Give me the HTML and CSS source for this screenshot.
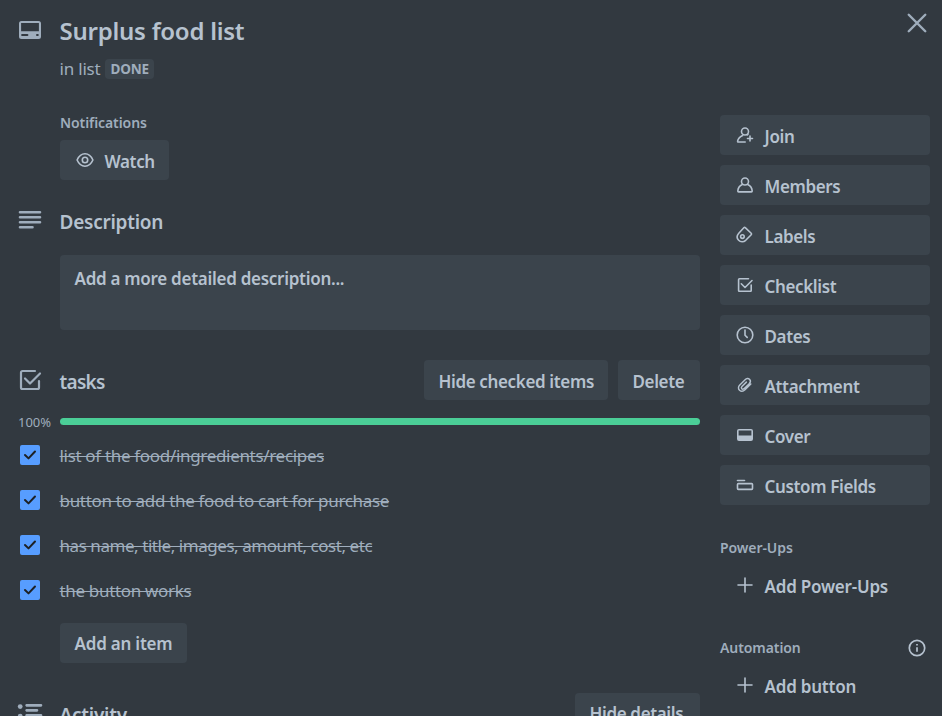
FILE: index.html
```html
<!DOCTYPE html>
<html lang="en">
<head>
<meta charset="utf-8">
<title>Surplus food list</title>
<link rel="stylesheet" href="styles.css">
</head>
<body>
<div class="card">
  <header class="card-header">
    <svg class="icon" viewBox="0 0 24 24"><path fill-rule="evenodd" d="M3.500 3h17a2.500 2.500 0 0 1 2.500 2.500v13a2.500 2.500 0 0 1-2.500 2.500h-17A2.500 2.500 0 0 1 1 18.500v-13A2.500 2.500 0 0 1 3.500 3Zm-.4 2.100v8.200h17.800V5.100H3.100Zm1 10.900a1 1 0 0 0 0 2h5.300a1 1 0 0 0 0-2H4.100Zm14.900 0a1 1 0 0 0 0 2h.8a1 1 0 0 0 0-2H19Z"/></svg>
    <div class="heading">
      <h1>Surplus food list</h1>
      <p class="in-list"><span>in list</span><span class="list-name">DONE</span></p>
    </div>
    <button class="close" aria-label="Close"><svg viewBox="0 0 20 20"><path d="M2.500 2.500l15 15M17.500 2.500l-15 15"/></svg></button>
  </header>
  <div class="columns">
    <main>
      <section class="notifications">
        <h3>Notifications</h3>
        <button class="btn watch"><svg class="small stroke" viewBox="0 0 20 20"><path d="M2.100 10C4 5.700 6.800 3.800 10 3.800s6 1.900 7.900 6.200c-1.900 4.300-4.700 6.200-7.900 6.200S4 14.300 2.100 10Z"/><circle cx="10" cy="10" r="2.700"/></svg><span>Watch</span></button>
      </section>
      <section class="description">
        <div class="section-head">
          <svg class="icon" viewBox="0 0 24 24"><path d="M2 3h20a1.300 1.300 0 0 1 0 2.600H2A1.300 1.300 0 0 1 2 3Zm0 5h20a1.300 1.300 0 0 1 0 2.600H2A1.300 1.300 0 0 1 2 8Zm0 5h20a1.300 1.300 0 0 1 0 2.600H2A1.300 1.300 0 0 1 2 13Zm0 5h12.500a1.300 1.300 0 0 1 0 2.600H2A1.300 1.300 0 0 1 2 18Z"/></svg>
          <h2>Description</h2>
        </div>
        <div class="description-box">Add a more detailed description...</div>
      </section>
      <section class="checklist">
        <div class="section-head">
          <svg class="icon big-stroke" viewBox="0 0 24 24"><path d="M17 3H4.500A1.500 1.500 0 0 0 3 4.500v15A1.500 1.500 0 0 0 4.500 21h15a1.500 1.500 0 0 0 1.500-1.500V13M7 10.500l5 5L22 5.500"/></svg>
          <h2>tasks</h2>
          <div class="actions"><button class="btn hide-checked">Hide checked items</button><button class="btn delete">Delete</button></div>
        </div>
        <div class="progress"><span>100%</span><div class="bar"></div></div>
        <ul>
          <li><svg class="check" viewBox="0 0 20 20"><path d="M5 10l3.500 3.400L15 6.500"/></svg><s>list of the food/ingredients/recipes</s></li>
          <li><svg class="check" viewBox="0 0 20 20"><path d="M5 10l3.500 3.400L15 6.500"/></svg><s>button to add the food to cart for purchase</s></li>
          <li><svg class="check" viewBox="0 0 20 20"><path d="M5 10l3.500 3.400L15 6.500"/></svg><s class="tight">has name, title, images, amount, cost, etc</s></li>
          <li><svg class="check" viewBox="0 0 20 20"><path d="M5 10l3.500 3.400L15 6.500"/></svg><s>the button works</s></li>
        </ul>
        <button class="btn add-item">Add an item</button>
      </section>
      <section class="activity">
        <div class="section-head">
          <svg class="icon" viewBox="0 0 24 24"><circle cx="2.200" cy="5.600" r="2.400"/><circle cx="2.200" cy="15.100" r="2.400"/><path d="M8.300 3h15a1.400 1.400 0 0 1 0 2.700h-15a1.400 1.400 0 0 1 0-2.700Zm0 5h11a1.400 1.400 0 0 1 0 2.700h-11a1.400 1.400 0 0 1 0-2.700Zm0 5h15a1.400 1.400 0 0 1 0 2.700h-15a1.400 1.400 0 0 1 0-2.700Z"/></svg>
          <h2>Activity</h2>
          <div class="actions"><button class="btn details">Hide details</button></div>
        </div>
      </section>
    </main>
    <aside>
      <nav>
        <button class="btn side"><svg class="small stroke" viewBox="0 0 20 20"><path d="M10.200 17H3.200c-.5 0-.7-.3-.6-.8.400-2.700 2.200-4.400 5-5.700M12.300 10l.7-.7"/><circle cx="10" cy="6.500" r="3.500"/><path d="M15 11v5M12.500 13.500h5"/></svg><span>Join</span></button>
        <button class="btn side"><svg class="small stroke" viewBox="0 0 20 20"><circle cx="10" cy="6.500" r="3.500"/><path d="M7.300 9.600C4.500 10.900 3 13.200 2.800 16c0 .6.200.9.800.9h12.800c.6 0 .8-.3.800-.9-.2-2.800-1.700-5.100-4.500-6.400"/></svg><span>Members</span></button>
        <button class="btn side"><svg class="small stroke" viewBox="0 0 20 20"><path d="M8.800 2.800 3.800 8.200C1.900 10.400 1.700 13.300 3.600 15.300s5 2 7.100 0l5.500-5.500c.5-.5.500-1 0-1.500l-5.700-5.500c-.6-.5-1.200-.5-1.700 0Z"/><circle cx="7.400" cy="11.600" r="1.800"/></svg><span>Labels</span></button>
        <button class="btn side"><svg class="small stroke" viewBox="0 0 20 20"><path d="M13.500 3.700H4.400a.8.800 0 0 0-.8.800v11a.8.800 0 0 0 .8.800h11a.8.800 0 0 0 .8-.8V10M6.300 8.800l3.700 3.700 7-7"/></svg><span>Checklist</span></button>
        <button class="btn side"><svg class="small stroke" viewBox="0 0 20 20"><circle cx="10" cy="10" r="7.800"/><path d="M10 5v5.200l2.200 2.200"/></svg><span>Dates</span></button>
        <button class="btn side"><svg class="small stroke clip" viewBox="0 0 20 20"><path d="M16.500 9 10 15.300c-2 2-4.500 2-6.100.5s-1.600-4 .3-5.900l5.900-5.800c1.500-1.500 3.600-1.700 4.900-.4s1.200 3.300-.3 4.800l-5.600 5.500c-.9.900-2 .9-2.700.2s-.6-1.700.2-2.600l4.900-4.800"/></svg><span>Attachment</span></button>
        <button class="btn side"><svg class="small" viewBox="0 0 20 20"><path fill-rule="evenodd" d="M4 4h12a2 2 0 0 1 2 2v8a2 2 0 0 1-2 2H4a2 2 0 0 1-2-2V6a2 2 0 0 1 2-2Zm-.4 1.600v5h12.800v-5H3.600Z"/></svg><span>Cover</span></button>
        <button class="btn side"><svg class="small stroke" viewBox="0 0 20 20"><path d="M2.500 5.500h7"/><rect x="2.500" y="8.600" width="15" height="5.800" rx=".8"/></svg><span>Custom Fields</span></button>
      </nav>
      <section class="power">
        <h3>Power-Ups</h3>
        <button class="btn side plain"><svg class="small stroke" viewBox="0 0 20 20"><path d="M10 3v14M3 10h14"/></svg><span>Add Power-Ups</span></button>
      </section>
      <section class="automation">
        <h3><span>Automation</span><svg class="info" viewBox="0 0 20 20"><circle cx="10" cy="10" r="7.700"/><path d="M10 9.200v4.500M10 6v1.500"/></svg></h3>
        <button class="btn side plain"><svg class="small stroke" viewBox="0 0 20 20"><path d="M10 3v14M3 10h14"/></svg><span>Add button</span></button>
      </section>
    </aside>
  </div>
</div>
</body>
</html>
```
FILE: styles.css
```css
* { box-sizing: border-box; }
html, body { margin: 0; height: 716px; overflow: hidden; background: #323940; }
body { font: 400 17px/25px "Noto Sans", "Open Sans", sans-serif; color: #b6c2cf; }
h1, h2, h3, p, ul { margin: 0; padding: 0; }
svg { display: block; flex: none; overflow: visible; }
.card { width: 942px; height: 716px; overflow: hidden; }
.card-header { display: flex; height: 115px; padding: 15px 10px 0 15px; }
.icon { width: 30px; height: 30px; padding: 3px; fill: #9fadbc; }
.heading { flex: 1; padding-left: 14.500px; }
h1 { font-size: 24px; line-height: 32px; font-weight: 600; letter-spacing: -.25px; }
.in-list { display: flex; align-items: center; gap: 5px; margin-top: 9px; color: #9fadbc; letter-spacing: -.2px; }
.list-name { height: 20px; padding: 0 5px; border-radius: 4px; background: #3b444c; font-size: 13.500px; font-weight: 700; line-height: 21px; letter-spacing: -.2px; }
.close { width: 30px; height: 30px; margin-top: -7px; padding: 4px; border: 0; background: none; }
.close svg { width: 22px; height: 22px; fill: none; stroke: #9fadbc; stroke-width: 2.200; stroke-linecap: round; }
.columns { display: grid; grid-template-columns: 640px 210px; gap: 20px; padding-left: 60px; }
h2 { font-size: 19px; line-height: 25px; font-weight: 600; letter-spacing: -.25px; }
h3 { font-size: 14px; line-height: 25px; font-weight: 600; letter-spacing: -.08px; color: #9fadbc; }
.btn { display: flex; align-items: center; height: 40px; padding: 2px 14.500px 0; border: 0; border-radius: 4px; background: #3b444c; color: #b6c2cf; font: inherit; font-weight: 600; letter-spacing: -.36px; white-space: nowrap; }
.small { width: 20px; height: 20px; fill: #b6c2cf; }
.stroke { fill: none; stroke: #b6c2cf; stroke-width: 1.600; stroke-linecap: round; stroke-linejoin: round; }
.clip { padding: 1px; }
.watch { width: 109px; gap: 10px; }
.watch svg, .side svg { margin-top: -2px; }
.notifications h3 { margin-top: -5px; margin-bottom: 5px; }
.description { margin-top: 25px; }
.section-head { display: flex; align-items: flex-start; height: 40px; margin-left: -45px; }
.section-head h2 { margin: 5px 0 0 14.500px; }
.description .section-head { height: 50px; }
.description-box { height: 75px; padding: 11px 14.500px; border-radius: 4px; background: #3b444c; font-weight: 600; letter-spacing: -.28px; }
.checklist { margin-top: 30px; }
.checklist .icon { margin-top: 5px; }
.big-stroke { fill: none; stroke: #9fadbc; stroke-width: 2.200; stroke-linecap: round; stroke-linejoin: round; }
.checklist h2, .activity h2 { margin-top: 10px; }
.checklist h2 { letter-spacing: -.7px; }
.actions { display: flex; gap: 10px; margin-left: auto; }
.hide-checked { width: 184px; }
.delete { width: 82px; }
.progress { display: flex; align-items: center; margin: 12px 0 0 -42px; height: 20px; font-size: 13px; color: #9fadbc; letter-spacing: 0; }
.progress span { width: 42px; }
.bar { flex: 1; height: 7px; margin-top: -1px; border-radius: 4px; background: #4bce97; }
ul { list-style: none; }
li { display: flex; height: 45px; margin-left: -40px; padding-top: 13px; gap: 19.500px; color: #9fadbc; }
.check { width: 20px; height: 20px; border-radius: 2px; background: #579dff; fill: none; stroke: #1d2125; stroke-width: 2; stroke-linecap: round; stroke-linejoin: round; }
li s { line-height: 22px; letter-spacing: -.32px; text-decoration-thickness: 1px; }
li .tight { letter-spacing: -.44px; }
.add-item { width: 127px; margin-top: 11px; padding-top: 1px; letter-spacing: -.22px; }
.activity { margin-top: 30px; }
.activity .icon { margin-top: 5px; }
.details { width: 125px; padding-top: 1px; }
nav { display: grid; gap: 10px; }
.side { width: 210px; gap: 10px; }
.plain { background: transparent; letter-spacing: -.22px; }
.power { margin-top: 30px; }
.power h3, .automation h3 { display: flex; justify-content: space-between; align-items: center; margin-bottom: 5px; }
.automation { margin-top: 30px; }
.info { width: 20px; height: 20px; margin-right: 3px; fill: none; stroke: #b6c2cf; stroke-width: 1.700; }
```
